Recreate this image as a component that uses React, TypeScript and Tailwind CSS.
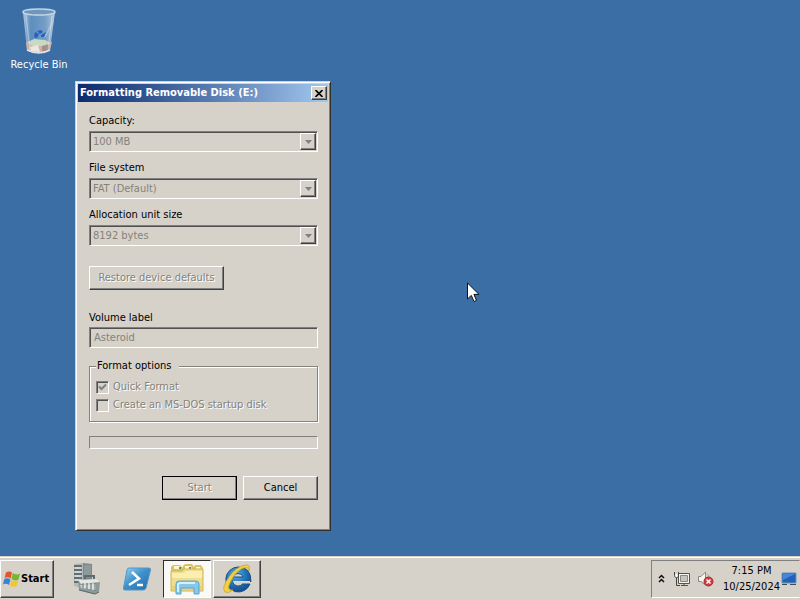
import { useState } from "react";
import type { ReactNode } from "react";

const raised =
  "bg-[#d6d2c9] border border-t-white border-l-white border-r-[#404040] border-b-[#404040] shadow-[inset_-1px_-1px_0_#808080]";
const sunken =
  "bg-[#d6d2c9] border border-t-[#808080] border-l-[#808080] border-r-white border-b-white shadow-[inset_1px_1px_0_#505050]";
const etched = "text-[#85827b] [text-shadow:1px_1px_0_#fff]";

function RecycleBinIcon() {
  return (
    <svg width="36" height="48" viewBox="0 0 36 48" aria-hidden="true">
      <defs>
        <linearGradient id="bin" x1="0" x2="1">
          <stop offset="0" stopColor="#c6d9ea" stopOpacity=".85" />
          <stop offset=".25" stopColor="#6c9bcb" stopOpacity=".7" />
          <stop offset=".7" stopColor="#8fb2d4" stopOpacity=".7" />
          <stop offset="1" stopColor="#c9d8e4" stopOpacity=".9" />
        </linearGradient>
      </defs>
      <path d="M2 4 L6 42 Q18 48 29 42 L34 4 Z" fill="url(#bin)" />
      <path d="M5 34 Q17 30 31 34 L29 42 Q18 48 6 42 Z" fill="#c5b4ad" />
      <path d="M7 34 L13 31 L24 32 L30 36 L24 38 L11 38 Z" fill="#c9d9c3" />
      <path d="M9 39 L17 37 L19 44 L10 43 Z" fill="#f0e6df" />
      <path d="M21 38 L28 36 L27 42 L21 44 Z" fill="#a68f87" />
      <path d="M14 24 L18 26 L16 30 L13 29 Z M20 27 L25 24 L23 29 L20 29 Z M16 23 L20 22 L22 24 L19 26 Z" fill="#2460bd" />
      <path d="M5 7 L9 42 M31 8 L27 41" stroke="#e4edf4" strokeOpacity=".5" fill="none" />
      <path d="M24 29 L32 13" stroke="#d5e3ee" strokeOpacity=".6" fill="none" />
      <ellipse cx="18" cy="4" rx="16" ry="3" fill="#6f97bd" stroke="#c3d6e2" strokeWidth="1.500" />
      <path d="M6 42 Q18 48 29 42" stroke="#dfe4e8" strokeWidth="1.500" fill="none" />
    </svg>
  );
}

function WindowsFlag() {
  return (
    <svg width="17" height="16" viewBox="0 0 17 16" aria-hidden="true">
      <path d="M3 1.500 Q6 -.5 9 1.500 L7.700 7.500 Q4.700 5.500 1.500 7 Z" fill="#e8542a" />
      <path d="M9.800 2 Q13 4.500 17 2.500 L15.500 8.500 Q12 10.500 8.500 8 Z" fill="#74b72f" />
      <path d="M1.300 7.900 Q4.500 6.500 7.400 8.500 L6 14 Q3 12 0 13.500 Z" fill="#3a81d6" />
      <path d="M8.300 9 Q11.500 11.300 15.200 9.500 L13.700 14.800 Q10 17 6.800 14.500 Z" fill="#f6c52b" />
    </svg>
  );
}

function ServerIcon() {
  return (
    <svg width="30" height="34" viewBox="0 0 30 34" aria-hidden="true">
      <path d="M2 2 L11 1 V27 L2 24 Z" fill="#b4babb" />
      <path d="M11 1 L20 2 V27 H11 Z" fill="#7d8989" />
      <path d="M12 3 H19 V15 H12 Z" fill="#8e9a99" />
      <path d="M2 4 H10 M2 8 H10 M2 12 H10 M2 16 H10 M2 20 H9" stroke="#4a5555" strokeWidth="1.500" />
      <path d="M3 6 H9 M3 10 H9 M3 14 H9 M3 18 H9" stroke="#eef1f0" />
      <path d="M13 17 V14 H22 V17" stroke="#606c6b" strokeWidth="2" fill="none" />
      <path d="M6 18 L25 17 L28 20 L27 30 L23 32 L7 28 Z" fill="#8d9997" />
      <path d="M6 18 L25 17 L28 20 L9 22 Z" fill="#e3e7e4" />
      <path d="M8 23 L24 22 V28 L9 26 Z" fill="#c6cecb" />
      <path d="M11 21 V26 M15 21 V27 M19 21 V28 M23 21 V29" stroke="#71807d" />
      <path d="M13 21 V26 M17 21 V27 M21 21 V28" stroke="#eff2f0" />
      <path d="M7 28 L23 32 L27 30" stroke="#5a6563" fill="none" />
    </svg>
  );
}

function PowerShellIcon() {
  return (
    <svg width="30" height="26" viewBox="0 0 30 26" aria-hidden="true">
      <defs>
        <linearGradient id="ps" x1="0" x2="1" y1="0" y2="1">
          <stop offset="0" stopColor="#9cd4ee" />
          <stop offset=".45" stopColor="#3e93cc" />
          <stop offset="1" stopColor="#2368aa" />
        </linearGradient>
      </defs>
      <path d="M7 2 H27 Q29 2 28.500 4 L24 22 Q23.500 24 21 24 H3 Q1 24 1.500 22 L5 4 Q5.500 2 7 2 Z" fill="url(#ps)" stroke="#5496c0" />
      <path d="M10 6 L17 12.500 L7 19" stroke="#fff" strokeWidth="2.500" fill="none" />
      <path d="M15 19 H21" stroke="#fff" strokeWidth="2.500" />
    </svg>
  );
}

function ExplorerIcon() {
  return (
    <svg width="34" height="32" viewBox="0 0 34 32" aria-hidden="true">
      <path d="M1 8 V4 L3 2 H10 L12 4 H13 V3 L15 1 H22 L24 4 L25 2 H31 L33 5 V27 H1 Z" fill="#dcc361" />
      <path d="M4 3 H10 L11 6 H4 Z M15 3 H21 L22 6 H15 Z M26 4 H30 L31 7 H26 Z" fill="#fff7c7" />
      <path d="M9 4 H11 V6 H9 Z" fill="#4d9b55" />
      <path d="M19 4 H21 V6 H19 Z" fill="#547eb7" />
      <path d="M1 8 H12 L14 6 H33 V28 H1 Z" fill="#f1de8c" stroke="#cdb45f" />
      <path d="M2 10 H14 L16 8 H32 V15 H2 Z" fill="#faeeb0" />
      <path d="M2 23 H32 V27 H2 Z" fill="#e9d27d" />
      <path d="M6 31 V21 Q6 18 9 18 H26 Q29 18 29 21 V31 H24 V25 H11 V31 Z" fill="#86c8ea" stroke="#5ba5cf" />
      <path d="M8 29 V21 L10 20 H25" stroke="#d6f1fc" strokeWidth="2" fill="none" />
    </svg>
  );
}

function InternetExplorerIcon() {
  return (
    <svg width="32" height="32" viewBox="0 0 32 32" aria-hidden="true">
      <defs>
        <radialGradient id="ie" cx=".4" cy=".3" r=".8">
          <stop offset="0" stopColor="#5db4e4" />
          <stop offset=".5" stopColor="#1f74ba" />
          <stop offset="1" stopColor="#103f7e" />
        </radialGradient>
      </defs>
      <path
        fillRule="evenodd"
        d="M17 4 A12.500 12.500 0 1 0 29 21 H21.500 Q19.500 23.500 16.500 23 Q12 22.500 11.500 18.500 H30 Q30 4 17 4 Z M11.500 14 Q13 10.500 17 10.500 Q21.500 10.500 22 14 Z"
        fill="url(#ie)"
        stroke="#174f87"
      />
      <path d="M12 18.500 H29" stroke="#bce5f7" />
      <path d="M28 8 Q30 1 24 2 Q15 4 8 14 Q0 25 4 29 Q7 31 12 27 Q5.500 28 8.500 21 Q13 10 21 5.500 Q28 3 28 8 Z" fill="#f1cf48" stroke="#cda52c" strokeWidth=".8" />
    </svg>
  );
}

function NetworkIcon() {
  return (
    <svg width="18" height="16" viewBox="0 0 18 16" aria-hidden="true">
      <path d="M5.500 2.500 H16.500 V12.500 H5.500 Z" fill="#f5f4ef" stroke="#55534f" />
      <path d="M7.500 4.500 H14.500 V10.500 H7.500 Z" fill="#c8c5be" stroke="#8b8984" />
      <path d="M8 14.500 H15 M11 13 V15" stroke="#55534f" />
      <path d="M1.500 1 V4.500 Q1.500 6.500 3.500 6.500 Q5.500 6.500 5.500 4.500 V1 M3.500 7 V14.500 H7" stroke="#45433f" fill="none" />
      <path d="M2.500 3 H4.500 V6 H2.500 Z" fill="#fff" />
    </svg>
  );
}

function MutedIcon() {
  return (
    <svg width="18" height="16" viewBox="0 0 18 16" aria-hidden="true">
      <path d="M1.500 5.500 H4 L8.500 1 V14 L4 10.500 H1.500 Z" fill="#f6f5f1" stroke="#8a8780" />
      <path d="M10 3 Q12 4 12 6" stroke="#aaa79f" fill="none" />
      <circle cx="11.500" cy="10.500" r="4.500" fill="#d43b40" stroke="#a9282f" />
      <path d="M9.500 8.500 L13.500 12.500 M13.500 8.500 L9.500 12.500" stroke="#fff" strokeWidth="1.500" />
    </svg>
  );
}

function DesktopPeekIcon() {
  return (
    <svg width="16" height="14" viewBox="0 0 16 14" aria-hidden="true">
      <path d="M1 1 H15 V11 H1 Z" fill="#2460b8" stroke="#6b93bd" />
      <path d="M2 2 H14 L2 8 Z" fill="#4486dc" />
      <path d="M1 12.500 H6 M9 12.500 H15" stroke="#404a58" />
      <path d="M2 11 H4" stroke="#5caf58" />
    </svg>
  );
}

function Cursor() {
  return (
    <svg className="absolute left-[467px] top-[282px]" width="13" height="21" viewBox="0 0 13 21" aria-hidden="true">
      <path d="M.5 1 V17 L4.300 13.400 L7 19.500 L9.500 18.400 L6.900 12.400 H12 Z" fill="#fff" stroke="#111" />
    </svg>
  );
}

function SelectField({ id, label, value }: { id: string; label: string; value: string }) {
  return (
    <div className="mb-2">
      <label htmlFor={id} className="mb-0.5 block">
        {label}
      </label>
      <div className={`relative h-[21px] ${sunken}`}>
        <select
          id={id}
          disabled
          className="h-full w-full appearance-none bg-transparent pl-[3px] text-[#85827b] opacity-100"
        >
          <option>{value}</option>
        </select>
        <span className={`pointer-events-none absolute inset-y-px right-px flex w-4 items-center justify-center ${raised}`}>
          <svg width="7" height="4" viewBox="0 0 7 4" aria-hidden="true">
            <path d="M0 0 H7 L3.500 4 Z" fill="#808080" />
          </svg>
        </span>
      </div>
    </div>
  );
}

function CheckField({ label, checked }: { label: string; checked?: boolean }) {
  return (
    <label className={`flex h-[18px] items-center gap-1 ${etched}`}>
      <span className="relative flex h-[13px] w-[13px]">
        <input type="checkbox" defaultChecked={checked} disabled className={`h-full w-full appearance-none ${sunken}`} />
        {checked && (
          <svg className="absolute inset-0" width="13" height="13" viewBox="0 0 13 13" aria-hidden="true">
            <path d="M3 5.500 L5.500 8 L10 3.500" stroke="#808080" strokeWidth="2" fill="none" />
          </svg>
        )}
      </span>
      {label}
    </label>
  );
}

function FormatDialog({ onClose }: { onClose: () => void }) {
  return (
    <section
      role="dialog"
      aria-labelledby="dialog-title"
      className="absolute left-[75px] top-[81px] w-64 border border-t-[#d6d2c9] border-l-[#d6d2c9] border-r-[#303030] border-b-[#303030] bg-[#d6d2c9] p-0.5 shadow-[inset_1px_1px_0_#fff,inset_-1px_-1px_0_#808080]"
    >
      <header className="flex h-[18px] items-center justify-between bg-linear-to-r from-[#0d2a6e] to-[#a3c8ee] pl-0.5 pr-px">
        <h1 id="dialog-title" className="whitespace-nowrap font-bold text-white">
          Formatting Removable Disk (E:)
        </h1>
        <button type="button" aria-label="Close" onClick={onClose} className={`flex h-[14px] w-4 items-center justify-center ${raised}`}>
          <svg width="8" height="7" viewBox="0 0 8 7" aria-hidden="true">
            <path d="M.5 0 L7.500 7 M7.500 0 L.5 7" stroke="#000" strokeWidth="1.600" />
          </svg>
        </button>
      </header>

      <form className="pb-7 pl-[11px] pr-[10px] pt-[11px]" onSubmit={(e) => e.preventDefault()}>
        <SelectField id="capacity" label="Capacity:" value="100 MB" />
        <SelectField id="filesystem" label="File system" value="FAT (Default)" />
        <SelectField id="allocation" label="Allocation unit size" value="8192 bytes" />

        <button type="button" disabled className={`mt-5 block h-6 w-[135px] ${raised} ${etched}`}>
          Restore device defaults
        </button>

        <label htmlFor="volume" className="mt-5 block">
          Volume label
        </label>
        <input
          id="volume"
          disabled
          defaultValue="Asteroid"
          className={`mt-px block h-[21px] w-full px-1 text-[#85827b] ${sunken}`}
        />

        <fieldset className="mt-[10px] border border-[#85827b] px-1.5 pb-[7px] pt-1 shadow-[1px_1px_0_#fff,inset_1px_1px_0_#fff]">
          <legend className="bg-[#d6d2c9] pl-px pr-2">Format options</legend>
          <CheckField label="Quick Format" checked />
          <CheckField label="Create an MS-DOS startup disk" />
        </fieldset>

        <div
          role="progressbar"
          aria-label="Format progress"
          className="mt-[14px] h-[13px] border border-b-white border-l-[#808080] border-r-white border-t-[#808080]"
        />

        <div className="mt-[27px] flex justify-end gap-1.5">
          <button type="submit" disabled className={`h-6 w-[75px] outline outline-black -outline-offset-1 ${raised} ${etched}`}>
            Start
          </button>
          <button type="button" onClick={onClose} className={`h-6 w-[75px] ${raised}`}>
            Cancel
          </button>
        </div>
      </form>
    </section>
  );
}

function TaskButton({ label, className, children }: { label: string; className?: string; children: ReactNode }) {
  return (
    <button type="button" aria-label={label} className={`flex h-[38px] w-12 items-center justify-center ${className ?? ""}`}>
      {children}
    </button>
  );
}

function Taskbar() {
  return (
    <footer className="flex h-11 items-center border-t border-[#d6d2c9] bg-[#d6d2c9] shadow-[inset_0_1px_0_#fff]">
      <button type="button" className={`flex h-[38px] w-[54px] items-center gap-px pl-0.5 font-bold ${raised}`}>
        <WindowsFlag />
        Start
      </button>
      <nav className="ml-[9px] flex gap-0.5">
        <TaskButton label="Server Manager">
          <ServerIcon />
        </TaskButton>
        <TaskButton label="Windows PowerShell">
          <PowerShellIcon />
        </TaskButton>
        <TaskButton
          label="Windows Explorer"
          className="border border-b-white border-l-[#303030] border-r-white border-t-[#303030] bg-[#faf9f6]"
        >
          <ExplorerIcon />
        </TaskButton>
        <TaskButton label="Internet Explorer" className={raised}>
          <InternetExplorerIcon />
        </TaskButton>
      </nav>
      <div className="ml-auto flex h-[38px] items-center border border-b-white border-l-[#808080] border-r-[#d6d2c9] border-t-[#808080] pl-1.5 pr-0.5">
        <button type="button" aria-label="Show hidden icons" className="mr-2">
          <svg width="7" height="9" viewBox="0 0 7 9" aria-hidden="true">
            <path d="M1 4 L3.500 1.500 L6 4 M1 8 L3.500 5.500 L6 8" stroke="#111" strokeWidth="1.500" fill="none" />
          </svg>
        </button>
        <div className="flex gap-1.5">
          <NetworkIcon />
          <MutedIcon />
        </div>
        <time className="ml-2 mr-px text-center" dateTime="2024-10-25T19:15">
          7:15 PM
          <br />
          10/25/2024
        </time>
        <DesktopPeekIcon />
      </div>
    </footer>
  );
}

export default function App() {
  const [open, setOpen] = useState(true);

  return (
    <div className="flex min-h-screen flex-col bg-[#3a6ea5] font-['DejaVu_Sans_Condensed','DejaVu_Sans',sans-serif] text-[11px] leading-4 text-black">
      <main className="relative flex-1">
        <button type="button" className="absolute left-1 top-2 flex w-[70px] flex-col items-center gap-px text-white">
          <RecycleBinIcon />
          Recycle Bin
        </button>
        {open && <FormatDialog onClose={() => setOpen(false)} />}
        <Cursor />
      </main>
      <Taskbar />
    </div>
  );
}
